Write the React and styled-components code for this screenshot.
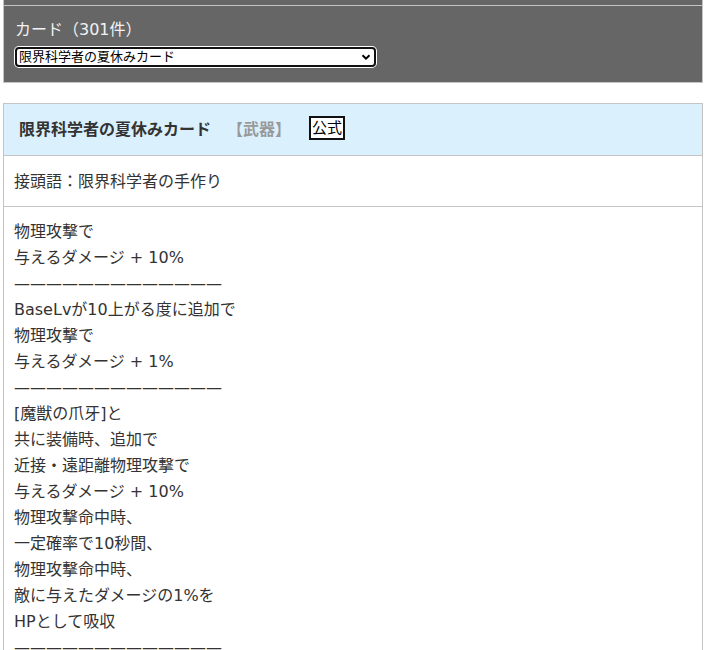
import React from "react";
import styled, { createGlobalStyle } from "styled-components";

const lines = [
    "物理攻撃で",
    "与えるダメージ + 10%",
    "rule",
    "BaseLvが10上がる度に追加で",
    "物理攻撃で",
    "与えるダメージ + 1%",
    "rule",
    "[魔獣の爪牙]と",
    "共に装備時、追加で",
    "近接・遠距離物理攻撃で",
    "与えるダメージ + 10%",
    "物理攻撃命中時、",
    "一定確率で10秒間、",
    "物理攻撃命中時、",
    "敵に与えたダメージの1%を",
    "HPとして吸収",
    "rule",
];

function App() {
    return (
        <>
            <Global />
            <Page>
                <SearchPanel>
                    <Divider />
                    <SearchBody>
                        <Label>カード（301件）</Label>
                        <SelectWrap>
                            <Select defaultValue="1">
                                <option value="1">限界科学者の夏休みカード</option>
                            </Select>
                            <Chevron viewBox="0 0 10 10">
                                <path d="M1.5 3.2 L5 6.6 L8.5 3.2" />
                            </Chevron>
                        </SelectWrap>
                    </SearchBody>
                </SearchPanel>

                <Card>
                    <CardHeader>
                        <Title>限界科学者の夏休みカード</Title>
                        <Kind>【武器】</Kind>
                        <OfficialButton>公式</OfficialButton>
                    </CardHeader>
                    <Row>接頭語：限界科学者の手作り</Row>
                    <Description>
                        {lines.map((line, i) =>
                            line === "rule" ? (
                                <Rule key={i}>—————————————</Rule>
                            ) : (
                                <Line key={i}>{line}</Line>
                            )
                        )}
                    </Description>
                </Card>
            </Page>
        </>
    );
}

const Global = createGlobalStyle`
    html, body {
        overflow: hidden;
    }
    body {
        margin: 0;
        background: #fff;
        font-family: "DejaVu Sans", "Noto Sans CJK JP", sans-serif;
        color: #333;
    }
`

const Page = styled.div`
    padding: 0 2px 0 3px;
    width: 700px;
`

const SearchPanel = styled.div`
    background: #666;
    border: 1px solid #c4c4c4;
    border-top: none;
`

const Divider = styled.div`
    height: 5px;
    border-bottom: 1px solid #c4c4c4;
`

const SearchBody = styled.div`
    padding: 12px 11px 15px;
    display: flex;
    flex-direction: column;
    gap: 5px;
`

const Label = styled.div`
    color: #f2f2f2;
    font-size: 16px;
    line-height: 24px;
`

const SelectWrap = styled.div`
    position: relative;
    width: 361px;
    height: 20px;
`

const Select = styled.select`
    display: block;
    appearance: none;
    width: 100%;
    height: 20px;
    box-sizing: border-box;
    border: 2px solid #111;
    border-radius: 4px;
    box-shadow: 0 0 0 1px #fff;
    background: #fff;
    font-family: "DejaVu Sans", "Noto Sans CJK JP", sans-serif;
    font-size: 13px;
    line-height: 14px;
    padding: 0 20px 0 2px;
    color: #000;
    outline: none;
`

const Chevron = styled.svg`
    position: absolute;
    right: 5px;
    top: 5px;
    width: 10px;
    height: 10px;
    fill: none;
    stroke: #000;
    stroke-width: 2;
    pointer-events: none;
`

const Card = styled.div`
    margin-top: 20px;
    border: 1px solid #c4c4c4;
    border-bottom: none;
`

const CardHeader = styled.div`
    background: #dbf0fd;
    height: 51px;
    box-sizing: border-box;
    padding: 0 0 3px 15px;
    border-bottom: 1px solid #c4c4c4;
    display: flex;
    align-items: center;
    box-sizing: content-box;
    height: 48px;
`

const Title = styled.span`
    font-weight: bold;
    font-size: 16px;
    color: #333;
`

const Kind = styled.span`
    font-weight: bold;
    font-size: 16px;
    color: #999;
    margin-left: 16px;
`

const OfficialButton = styled.button`
    margin-left: 18px;
    background: #fff;
    border: 2px solid #111;
    border-radius: 0;
    padding: 0 1px;
    height: 24px;
    font-family: "DejaVu Sans", "Noto Sans CJK JP", sans-serif;
    font-size: 15px;
    color: #000;
    line-height: 20px;
`

const Row = styled.div`
    font-size: 16px;
    line-height: 26px;
    padding: 13px 10px 11px;
    border-bottom: 1px solid #c4c4c4;
`

const Description = styled.div`
    padding: 12px 10px 10px;
    font-size: 16px;
    line-height: 26px;
`

const Line = styled.div``

const Rule = styled.div`
    font-family: "DejaVu Sans", sans-serif;
    overflow: hidden;
    white-space: nowrap;
`

export default App;
